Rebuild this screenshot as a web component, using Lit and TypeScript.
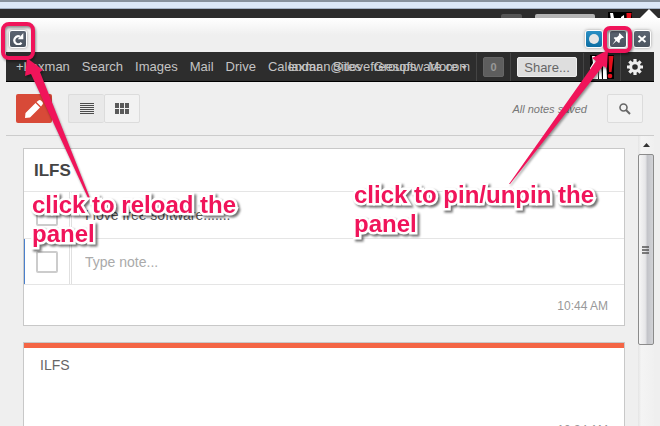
import { LitElement, html, css, svg } from "lit";
import { customElement } from "lit/decorators.js";

@customElement("app-root")
export class AppRoot extends LitElement {
  static styles = css`
    :host {
      display: block;
      position: relative;
      height: 100vh;
      overflow: hidden;
      background: #efefef;
      font-family: "Liberation Sans", Arial, sans-serif;
      color: #444;
    }
    * {
      box-sizing: border-box;
    }
    button {
      font-family: inherit;
      padding: 0;
      margin: 0;
      display: flex;
      align-items: center;
      justify-content: center;
    }
    .page {
      display: flex;
      flex-direction: column;
      height: 100%;
    }
    .chrome {
      height: 9px;
      background: #dbe8f7;
      border-top: 2px solid #87929d;
      border-bottom: 1px solid #a5b4c6;
      flex: none;
    }
    .behind {
      height: 9px;
      flex: none;
      background: #2d2d2d;
      display: flex;
      justify-content: flex-end;
      align-items: flex-end;
      gap: 8px;
      padding-right: 2px;
      overflow: hidden;
    }
    .behind .tab {
      width: 21px;
      height: 4px;
      margin-right: 5px;
      background: #555;
      border-radius: 2px 2px 0 0;
    }
    .behind .wide {
      width: 60px;
      background: #b4b4b4;
    }
    .behind svg {
      display: block;
    }
    .panelbar {
      height: 34px;
      flex: none;
      background: linear-gradient(#fff, #efefef 50%);
      display: flex;
      align-items: center;
      gap: 8px;
      padding: 8px 10px 0;
    }
    .grow {
      flex: 1;
    }
    .tool {
      width: 16px;
      height: 16px;
      border: 0;
      border-radius: 2px;
      background: linear-gradient(#5a6370, #4c5560);
      box-shadow: 0 0 0 1px #fff, 0 0 3px 1px #999;
    }
    .tool.blue {
      background: linear-gradient(#2b8fc4, #0d6ea3);
    }
    .panel {
      margin: 0 6px;
      flex: 1;
      min-height: 0;
      display: flex;
      flex-direction: column;
    }
    .nav {
      flex: none;
      display: grid;
      height: 30px;
      background: #2d2d2d;
      border-bottom: 1px solid #000;
      font-size: 13px;
      line-height: 30px;
      color: #c4c4c4;
    }
    .links,
    .account {
      grid-area: 1 / 1;
      display: flex;
      align-items: center;
      white-space: nowrap;
    }
    .links {
      justify-self: start;
      gap: 12px;
      padding-left: 10px;
    }
    .account {
      justify-self: end;
      gap: 6px;
      padding-right: 11px;
    }
    .nav a {
      color: inherit;
      text-decoration: none;
    }
    .more {
      display: flex;
      align-items: center;
      gap: 3px;
    }
    .caret {
      border: 3px solid transparent;
      border-top-color: #c4c4c4;
      border-bottom: 0;
    }
    .sep {
      width: 1px;
      height: 28px;
      background: #444;
    }
    .count {
      width: 21px;
      height: 20px;
      border: 1px solid #666;
      border-radius: 2px;
      background: #5e5e5e;
      color: #999;
      font-size: 11px;
      font-weight: bold;
    }
    .share {
      width: 60px;
      height: 20px;
      border: 1px solid #eee;
      border-radius: 2px;
      background: #dedede;
      color: #666;
      font-size: 13px;
    }
    .plain {
      border: 0;
      background: none;
    }
    .header {
      flex: none;
      height: 54px;
      display: flex;
      align-items: center;
      padding: 0 11px 0 10px;
      border-bottom: 1px solid #ccc;
    }
    .compose {
      width: 36px;
      height: 29px;
      border: 0;
      border-radius: 2px;
      background: #d84a38;
    }
    .views {
      display: flex;
      margin-left: 16px;
    }
    .views button,
    .search {
      width: 36px;
      height: 29px;
      border: 1px solid #dcdcdc;
      background: #f2f2f2;
      border-radius: 2px;
    }
    .views .on {
      background: #e9e9e9;
      border-right: 0;
    }
    .saved {
      font-size: 11px;
      font-style: italic;
      color: #777;
      margin-right: 20px;
    }
    .scroller {
      flex: 1;
      min-height: 0;
      display: flex;
    }
    .notes {
      flex: 1;
      padding: 12px 13px 0 17px;
      overflow: hidden;
      display: flex;
      flex-direction: column;
      gap: 16px;
    }
    .card {
      flex: none;
      background: #fff;
      border: 1px solid #c8c8c8;
    }
    h2 {
      margin: 0;
      padding: 0 10px;
      height: 43px;
      font-size: 17px;
      line-height: 44px;
      border-bottom: 1px solid #e5e5e5;
    }
    .row {
      display: flex;
      align-items: center;
      height: 46px;
      border-bottom: 1px solid #e5e5e5;
    }
    .row.first {
      height: 47px;
    }
    .box {
      width: 48px;
      align-self: stretch;
      display: flex;
      align-items: center;
      padding-left: 12px;
      border-right: 3px double #e0e0e0;
    }
    .row.active .box {
      border-left: 1px solid #4a80cc;
      padding-left: 11px;
    }
    .box input {
      appearance: none;
      width: 22px;
      height: 22px;
      margin: 0;
      border: 2px solid #ccc;
      border-radius: 2px;
      background: #fff;
    }
    .text {
      flex: 1;
      min-width: 0;
      border: 0;
      padding: 0 13px;
      background: none;
      font-family: inherit;
      font-size: 14px;
      color: #555;
    }
    .text::placeholder {
      color: #aaa;
    }
    .foot {
      height: 40px;
      line-height: 42px;
      padding-right: 16px;
      text-align: right;
      font-size: 12px;
      color: #999;
    }
    .accent {
      border-top: 5px solid #f46545;
    }
    h3 {
      margin: 0;
      padding: 0 16px;
      height: 61px;
      font-size: 14px;
      font-weight: normal;
      line-height: 34px;
      color: #666;
    }
    .track {
      flex: none;
      width: 16px;
      background: linear-gradient(90deg, #e4e4e4, #f4f4f4 20%, #f0f0f0);
    }
    .up {
      height: 18px;
      display: flex;
      align-items: center;
      justify-content: center;
    }
    .thumb {
      height: 66%;
      border: 1px solid #8b8b8b;
      border-radius: 2px;
      background: linear-gradient(90deg, #f6f6f6, #e6e6e8 45%, #c3c4c9 60%, #d2d3d7);
      display: flex;
      align-items: center;
      justify-content: center;
    }
    .marks {
      position: absolute;
      left: 0;
      top: 0;
      pointer-events: none;
      filter: drop-shadow(1px 2px 1px rgba(0, 0, 0, 0.4));
    }
    .callout {
      position: absolute;
      margin: 0;
      width: 256px;
      font-size: 24px;
      line-height: 29px;
      font-weight: bold;
      color: #f0145a;
      -webkit-text-stroke: 5px #fff;
      paint-order: stroke fill;
      stroke-linejoin: round;
      filter: drop-shadow(2px 2px 1px rgba(0, 0, 0, 0.55));
    }
    .reload {
      left: 32px;
      top: 190px;
    }
    .pin {
      left: 354px;
      top: 180px;
    }
  `;

  private avatar(height: number) {
    return html`<svg width="24" height=${height} viewBox=${`0 0 24 ${height}`}>
      <rect width="24" height="24" fill="#000" />
      ${svg`<g fill="#fff"><path d="M2 1 5 1 6 6 8 10 8 24 0 24 0 13 3 8Z"/><path d="M8 7 11 6 12 24 9 24Z"/><path d="M13 5 16 3 17 24 13 24Z"/></g>
      <path d="M18.500 1 23.500 1 21.500 17 19 17Z" fill="#e8101c"/><circle cx="20" cy="21" r="2.300" fill="#e8101c"/>`}
    </svg>`;
  }

  render() {
    const links = ["+Laxman", "Search", "Images", "Mail", "Drive", "Calendar", "Sites", "Groups"];
    return html`
      <div class="page">
        <div class="chrome"></div>
        <div class="behind">
          <span class="tab"></span>
          <span class="tab wide"></span>
          ${this.avatar(6)}
          <svg width="18" height="9" viewBox="0 0 18 9"><path d="M0 9 9 0 18 9Z" fill="#fff" /></svg>
        </div>
        <div class="panelbar">
          <button class="tool" aria-label="Reload">
            <svg width="12" height="12" viewBox="0 0 12 12"><path d="M9.500 9.800A4 4 0 1 1 8 3.600" fill="none" stroke="#fff" stroke-width="2.200" /><path d="M11.300 0V6.200H5.800Z" fill="#fff" /></svg>
          </button>
          <span class="grow"></span>
          <button class="tool blue" aria-label="Status">
            <svg width="12" height="12" viewBox="0 0 12 12"><circle cx="6" cy="6" r="5" fill="#e6e6e6" /></svg>
          </button>
          <button class="tool" aria-label="Pin">
            <svg width="12" height="12" viewBox="0 0 12 12"><path d="M7.500 0 12 4.500 10.800 5 9.800 4.900 7.800 7 7.800 9.300 6.900 10 4.400 7.900 0.200 11.800 3.500 7.100 1.700 5 2.500 4.300 4.900 4.200 7 2.200 6.900 1Z" fill="#fff" /></svg>
          </button>
          <button class="tool" aria-label="Close">
            <svg width="10" height="10" viewBox="0 0 10 10"><path d="M1.500 2 8.500 8M8.500 2 1.500 8" stroke="#fff" stroke-width="2" /></svg>
          </button>
        </div>
        <main class="panel">
          <nav class="nav">
            <div class="links">
              ${links.map((l) => html`<a href="#">${l}</a>`)}
              <a href="#" class="more">More<span class="caret"></span></a>
            </div>
            <div class="account">
              <a href="#">laxman@ilovefreesoftware.com</a>
              <span class="sep"></span>
              <button class="count">0</button>
              <span class="sep"></span>
              <button class="share">Share...</button>
              <span class="sep"></span>
              ${this.avatar(24)}
              <span class="sep"></span>
              <button class="plain" aria-label="Settings">
                <svg width="16" height="16" viewBox="-8 -8 16 16">
                  <circle r="4.300" fill="none" stroke="#eee" stroke-width="3" />
                  ${[0, 45, 90, 135].map((a) => svg`<path d="M0 -8V-5M0 8V5" stroke="#eee" stroke-width="3.200" transform="rotate(${a})"/>`)}
                </svg>
              </button>
            </div>
          </nav>
          <header class="header">
            <button class="compose" aria-label="New note">
              <svg width="20" height="20" viewBox="0 0 20 20"><path d="M1 19 1.500 14 11.500 4 16 8.500 6 18.500ZM12.500 3 14.500 1.500Q16 0.500 17.500 2L18.500 3Q19.500 4.500 18.500 5.500L17 7.500Z" fill="#fff" /></svg>
            </button>
            <div class="views">
              <button class="on" aria-label="List view">
                <svg width="14" height="11" viewBox="0 0 14 11"><path d="M0 0.500H14M0 2.500H14M0 4.500H14M0 6.500H14M0 8.500H14M0 10.500H14" stroke="#4c4c4c" /></svg>
              </button>
              <button aria-label="Grid view">
                <svg width="14" height="11" viewBox="0 0 14 11"><path d="M0 0h4v5H0zM5 0h4v5H5zM10 0h4v5h-4zM0 6h4v5H0zM5 6h4v5H5zM10 6h4v5h-4z" fill="#5a5a5a" /></svg>
              </button>
            </div>
            <span class="grow"></span>
            <span class="saved">All notes saved</span>
            <button class="search" aria-label="Search notes">
              <svg width="12" height="12" viewBox="0 0 12 12"><circle cx="4.500" cy="4.500" r="3.500" fill="none" stroke="#666" stroke-width="1.600" /><path d="M7 7 11 11" stroke="#666" stroke-width="2" /></svg>
            </button>
          </header>
          <div class="scroller">
            <div class="notes">
              <article class="card">
                <h2>ILFS</h2>
                <div class="row first">
                  <label class="box"><input type="checkbox" aria-label="Done" /></label>
                  <input class="text" aria-label="Note" .value=${"I love free software......."} />
                </div>
                <div class="row active">
                  <label class="box"><input type="checkbox" aria-label="Done" /></label>
                  <input class="text" aria-label="New note" placeholder="Type note..." />
                </div>
                <div class="foot">10:44 AM</div>
              </article>
              <article class="card">
                <div class="accent"></div>
                <h3>ILFS</h3>
                <div class="foot">10:34 AM</div>
              </article>
            </div>
            <div class="track">
              <div class="up"><svg width="7" height="4" viewBox="0 0 7 4"><path d="M0 4 3.500 0 7 4Z" fill="#333" /></svg></div>
              <div class="thumb"><svg width="8" height="8" viewBox="0 0 8 8"><path d="M0 1H7M0 4H7M0 7H7" stroke="#555" stroke-width="1.400" /></svg></div>
            </div>
          </div>
        </main>
      </div>
      <svg class="marks" width="660" height="200" viewBox="0 0 660 200">
        <g fill="none" stroke="#f0145a" stroke-width="4">
          <rect x="3" y="24" width="30" height="34" rx="6" />
          <rect x="605" y="28" width="25" height="23" rx="5" />
        </g>
        <g fill="#f0145a">
          <path d="M27 58 43 70 40 72 90 198 88 198 31 74 25 76Z" />
          <path d="M608 50 607 68 603 66 510 184 509 184 596 61 592 58Z" />
        </g>
      </svg>
      <p class="callout reload">click to reload the panel</p>
      <p class="callout pin">click to pin/unpin the panel</p>
    `;
  }
}
